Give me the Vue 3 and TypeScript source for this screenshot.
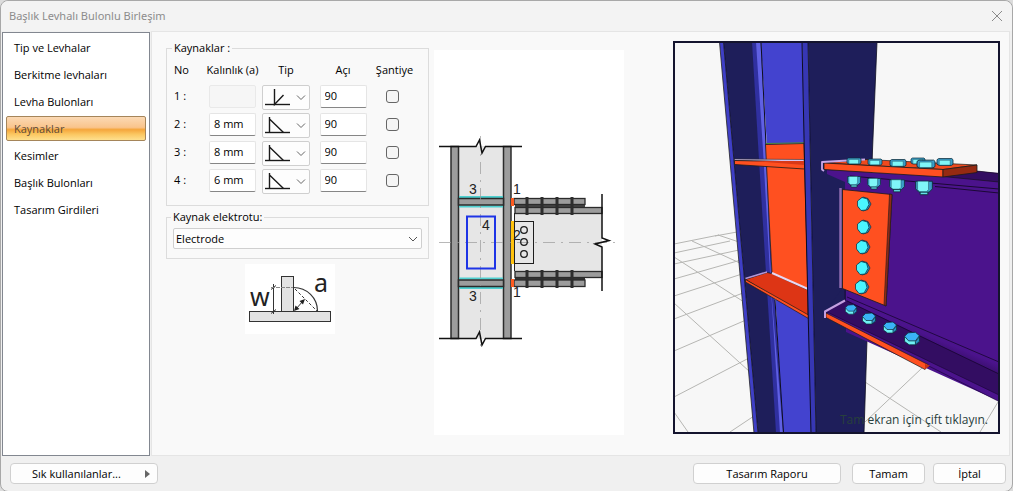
<script setup lang="ts">
import { ref } from 'vue'

interface Weld {
  no: number
  size: string
  kind: 'bevel' | 'fillet'
  angle: string
  site: boolean
}

interface Bolt {
  x: number
  y: number
  r: number
}

const pages = [
  'Tip ve Levhalar',
  'Berkitme levhaları',
  'Levha Bulonları',
  'Kaynaklar',
  'Kesimler',
  'Başlık Bulonları',
  'Tasarım Girdileri',
]
const current = ref('Kaynaklar')

const welds = ref<Weld[]>([
  { no: 1, size: '', kind: 'bevel', angle: '90', site: false },
  { no: 2, size: '8 mm', kind: 'fillet', angle: '90', site: false },
  { no: 3, size: '8 mm', kind: 'fillet', angle: '90', site: false },
  { no: 4, size: '6 mm', kind: 'fillet', angle: '90', site: false },
])
const electrode = ref('Electrode')

const boltLines = [527, 542, 557, 572]

const floorLines =
  'M674 244L719 235M674 253L730 241M674 264L739 250M674 279L741 260M674 296L742 274M674 319L743 293M674 351L746 320M674 397L749 358M730 432L754 416' +
  'M718 235L739 242M692 241L742 264M674 257L744 302M674 303L750 372M674 412L688 432M715 236L737 232' +
  'M922 368L865 422M865 382L941 432M998 402L980 432'

const webBolts: Bolt[] = [
  { x: 864, y: 204, r: 7 },
  { x: 864, y: 227, r: 7 },
  { x: 863, y: 247, r: 7 },
  { x: 863, y: 268, r: 7 },
  { x: 862, y: 287, r: 7 },
]
const topBolts: Bolt[] = [
  { x: 854, y: 161, r: 7 },
  { x: 875, y: 162, r: 7 },
  { x: 918, y: 161, r: 7 },
  { x: 898, y: 163, r: 8 },
  { x: 926, y: 164, r: 9 },
  { x: 945, y: 162, r: 8 },
]
const nuts: Bolt[] = [
  { x: 854, y: 181, r: 7 },
  { x: 874, y: 183, r: 7 },
  { x: 897, y: 185, r: 8 },
  { x: 924, y: 187, r: 9 },
]
const lowerBolts: Bolt[] = [
  { x: 851, y: 309, r: 6 },
  { x: 869, y: 318, r: 7 },
  { x: 890, y: 327, r: 7 },
  { x: 912, y: 338, r: 8 },
]

const place = (b: Bolt) => `translate(${b.x} ${b.y}) scale(${b.r / 7})`
</script>

<template>
  <div class="window">
    <header class="titlebar">
      <h1>Başlık Levhalı Bulonlu Birleşim</h1>
      <button class="close" type="button" aria-label="Kapat">
        <svg width="12" height="12" viewBox="0 0 12 12"><path d="M1 1L11 11M11 1L1 11" fill="none" stroke="#8a8a8a" /></svg>
      </button>
    </header>

    <div class="body">
      <nav class="pages">
        <button
          v-for="p in pages"
          :key="p"
          type="button"
          :class="['page', { active: p === current }]"
          @click="current = p"
        >{{ p }}</button>
      </nav>

      <main class="content">
        <div class="form">
          <fieldset class="group">
            <legend>Kaynaklar :</legend>
            <div class="grid head">
              <span class="left">No</span>
              <span>Kalınlık (a)</span>
              <span>Tip</span>
              <span>Açı</span>
              <span>Şantiye</span>
            </div>
            <div v-for="w in welds" :key="w.no" class="grid row">
              <span class="left">{{ w.no }} :</span>
              <input v-model="w.size" class="field" type="text" :disabled="w.kind === 'bevel'" :aria-label="`Kalınlık ${w.no}`" />
              <span class="type">
                <select v-model="w.kind" :aria-label="`Tip ${w.no}`">
                  <option value="bevel">Küt</option>
                  <option value="fillet">Köşe</option>
                </select>
                <svg width="48" height="25" viewBox="0 0 48 25">
                  <g fill="none" stroke="#1a1a1a" stroke-width="1.4">
                    <path d="M3 19.5H28" />
                    <path v-if="w.kind === 'bevel'" d="M12.500 4V19.500L21.500 10" />
                    <path v-else d="M7.500 4V19.500M7.500 6L21.500 19.500" />
                  </g>
                  <path d="M35 10.500L39 14.500L43 10.500" fill="none" stroke="#666" />
                </svg>
              </span>
              <input v-model="w.angle" class="field" type="text" :aria-label="`Açı ${w.no}`" />
              <input v-model="w.site" class="tick" type="checkbox" :aria-label="`Şantiye ${w.no}`" />
            </div>
          </fieldset>

          <fieldset class="group electrode">
            <legend>Kaynak elektrotu:</legend>
            <span class="combo">
              <select v-model="electrode" aria-label="Kaynak elektrotu">
                <option>Electrode</option>
              </select>
              <svg width="10" height="6" viewBox="0 0 10 6"><path d="M1 1L5 5L9 1" fill="none" stroke="#555" /></svg>
            </span>
          </fieldset>

          <svg class="weld" width="90" height="70" viewBox="245 264 90 70" aria-hidden="true">
            <rect x="245" y="264" width="90" height="70" fill="#fff" />
            <g fill="#e3e3e3" stroke="#333">
              <rect x="281.500" y="276.500" width="12" height="35" />
              <rect x="249.500" y="311.500" width="81" height="10" />
            </g>
            <g fill="none" stroke="#333">
              <path d="M293.500 287.500C307 287.500 317.500 298 317.500 311" stroke-width="1.200" />
              <path d="M295 289L317 311" stroke-dasharray="3 2" />
              <path d="M296 309L303 301" />
              <path d="M273.500 284V314" />
              <path d="M271 289.500L276 285.500M271 313.500L276 309.500" />
              <path d="M271 287.500H293" stroke="#888" stroke-dasharray="4 1" />
            </g>
            <path d="M294 311L295.500 305.500L299.500 309ZM305 299L299.500 301L303 304.500Z" fill="#222" />
            <text x="250" y="306" class="big">w</text>
            <text x="314" y="292" class="big">a</text>
          </svg>
        </div>

        <svg class="section" width="190" height="385" viewBox="434 50 190 385" aria-hidden="true">
          <rect x="434" y="50" width="190" height="385" fill="#fff" />
          <rect x="458" y="146" width="46" height="193" fill="#e6e6e6" />
          <g fill="#9c9c9c" stroke="#2b2b2b" stroke-width="1.500">
            <rect x="451" y="146.500" width="7.500" height="192" />
            <rect x="503.500" y="146.500" width="7.500" height="192" />
          </g>
          <g stroke="#4fcfcf" stroke-width="2">
            <path d="M459 197H503M459 206.500H503M459 278.500H503M459 288H503" />
          </g>
          <g fill="#9c9c9c" stroke="#2b2b2b" stroke-width="1.500">
            <rect x="458.500" y="198.500" width="45" height="6.500" />
            <rect x="458.500" y="280" width="45" height="6.500" />
          </g>
          <rect x="515" y="213" width="87" height="59" fill="#e6e6e6" />
          <rect x="515" y="204" width="70" height="4" fill="#444" />
          <rect x="515" y="277" width="70" height="4" fill="#333" />
          <g fill="#9c9c9c" stroke="#2b2b2b" stroke-width="1.300">
            <rect x="514" y="198.500" width="71" height="6" />
            <rect x="515" y="207.500" width="87" height="6" />
            <rect x="515" y="271.500" width="87" height="6" />
            <rect x="514" y="280" width="71" height="6.500" />
          </g>
          <g stroke="#2d2d2d" stroke-width="3">
            <path v-for="x in boltLines" :key="x" :d="`M${x} 197V215M${x} 270V288`" />
          </g>
          <rect x="514.500" y="221.500" width="19" height="42" fill="#e6e6e6" stroke="#1d1d1d" />
          <path d="M514.500 213V221M514.500 264V271" stroke="#222" />
          <path d="M514.500 222V263" stroke="#222" stroke-dasharray="4 3" />
          <g fill="#ff5a1e">
            <rect x="511" y="198" width="3" height="8" />
            <rect x="511" y="279" width="3" height="8" />
          </g>
          <rect x="511" y="221" width="3" height="43" fill="#ffc20e" />
          <g fill="none" stroke="#9a9a9a" stroke-width="0.700">
            <path d="M439 242.500H619" stroke-dasharray="12 6 2 6" />
            <path d="M480.500 136V346" stroke-dasharray="12 6 2 6" />
          </g>
          <g fill="none" stroke="#1d1d1d" stroke-width="1.300">
            <circle cx="524" cy="230" r="3.300" />
            <circle cx="524" cy="242" r="3.300" />
            <circle cx="524" cy="254" r="3.300" />
          </g>
          <rect x="467" y="216.500" width="28" height="52" fill="none" stroke="#1e34e6" stroke-width="2" />
          <g fill="none" stroke="#111" stroke-width="1.500">
            <path d="M439 146.500H476L479.500 140L482 153L485.500 146.500H522" />
            <path d="M439 338.500H476L479.500 332L482 345L485.500 338.500H522" />
            <path d="M602 194V238L609 240.500L595 244L602 247V291" />
          </g>
          <g class="mark">
            <text x="469" y="194">3</text>
            <text x="513" y="194">1</text>
            <text x="482" y="230">4</text>
            <text x="513" y="240">2</text>
            <text x="469" y="301">3</text>
            <text x="513" y="297">1</text>
          </g>
        </svg>

        <svg class="model" viewBox="673 41 327 393" role="img" aria-label="Birleşim modeli">
          <defs>
            <linearGradient id="root" gradientUnits="userSpaceOnUse" x1="925" y1="334" x2="920" y2="346">
              <stop offset="0" stop-color="#4b138c" />
              <stop offset="1" stop-color="#330d62" />
            </linearGradient>
          </defs>
          <rect x="673" y="41" width="327" height="393" fill="#f7f7f7" />
          <path :d="floorLines" fill="none" stroke="#b6b6b3" />

          <g stroke-linejoin="round">
            <path d="M719.500 42L754 433H758L723.500 42Z" fill="#3f3fc6" />
            <path d="M723.500 42L758 433H777L753 42Z" fill="#1e1e5a" stroke="#0c0c20" stroke-width="0.800" />
            <path d="M761 42L783 433H812L802 42Z" fill="#4343cf" />
            <path d="M752 42L761 42L766 145L772 273L775 300L783.500 433H776L766 273L759 160Z" fill="#3030a0" />
            <path d="M756 42H760.500L766 150L769 236L772 300L783 433H780L770 273L763 150Z" fill="#6060e4" />
            <path d="M761 42L766 145M775 300L783.500 433" stroke="#0c0c20" />
            <path d="M719.500 42L754 433" stroke="#222" stroke-width="0.800" />

            <path d="M765.500 144.500L804 143.500L808 289L772 273L770 236Z" fill="#ff5020" stroke="#1b1b1b" stroke-width="0.800" />
            <path d="M766 143.500L804 142.800" stroke="#4c8a35" />
            <path d="M734.500 159L804 159.500V162L734.500 160.500Z" fill="#d8c4ee" stroke="#333" stroke-width="0.600" />
            <path d="M734.500 160.500L804.500 162V169L734.500 164.500Z" fill="#ff5020" stroke="#1b1b1b" stroke-width="0.800" />
            <path d="M752 161L804.500 161V165Z" fill="#d83818" />
            <path d="M745.500 279.500L767 272.500L772 273.500L808 290V317Z" fill="#dd3515" stroke="#1b1b1b" stroke-width="0.800" />
            <path d="M745.500 279.500L808.500 315V318.500L745.500 282Z" fill="#ff5020" stroke="#1b1b1b" stroke-width="0.700" />
            <path d="M745.500 278.500L767 272" stroke="#b495d6" stroke-width="1.500" />
            <path d="M772 273L808 289" stroke="#e8d8f4" stroke-width="2" />

            <path d="M802 42H808L816 433H811L804.500 160Z" fill="#3737b4" />
            <path d="M802 42L804.500 160L811 433" fill="none" stroke="#0c0c20" />
            <path d="M808 42H877L872.500 150L867 340L864 433H816Z" fill="#1e1e5a" stroke="#0c0c20" stroke-width="0.800" />
          </g>

          <g stroke-linejoin="round">
            <path d="M827 170L943 176L977 171L999 173V401L846 332V300L845 182L827 174Z" fill="#4b138c" />
            <path d="M845 285L825 312L846 323Z" fill="#1e1e5a" />
            <path d="M943 176.500L977 171L999 173.500V182Z" fill="#330d62" stroke="#111" stroke-width="0.600" />
            <path d="M850 176L999 189M935 186.500L999 193" fill="none" stroke="#1b0835" />

            <path d="M847 297L999 362V375L847 301Z" fill="url(#root)" />
            <path d="M825 312L846 300L999 374V396Z" fill="#330d62" />
            <path d="M847 297L999 362M847 301L999 374M845 287V300" fill="none" stroke="#160530" stroke-width="0.800" />
            <path d="M827 312L999 395V401.500L827 314.500Z" fill="#4b138c" stroke="#160530" stroke-width="0.600" />
            <path d="M826 313L928 364.500L925 369.500L826 317.500Z" fill="#ff5020" stroke="#1b1b1b" stroke-width="0.700" />
            <path d="M925 364L930 365.500L925 369.500Z" fill="#c63518" />
            <path d="M825 318V311.500L845 300.500" fill="none" stroke="#c3a0e0" stroke-width="2" />

            <path d="M824 163L866 159.500L977 165L943 169.500Z" fill="#f04a1e" stroke="#1b1b1b" stroke-width="0.700" />
            <path d="M824 163L943 169.500V177L824 169.500Z" fill="#ff5020" stroke="#1b1b1b" stroke-width="0.800" />
            <path d="M943 169.500L977 165V172.500L943 177Z" fill="#962a12" stroke="#1b1b1b" stroke-width="0.800" />
            <path d="M824 171L822 169.500V162L865 159.500" fill="none" stroke="#caa8e8" stroke-width="1.800" />

            <path d="M840.500 188V288" stroke="#8f6cb0" stroke-width="2.500" />
            <path d="M842.500 189.500L892 194.500L886 306L842.500 288.500Z" fill="#ff5020" stroke="#1b1b1b" stroke-width="0.800" />
            <path d="M889.500 194L892 194.500L886 306L884 305Z" fill="#8f2a18" stroke="#1b1b1b" stroke-width="0.600" />
          </g>

          <g stroke="#0b2b3a" stroke-width="0.700" stroke-linejoin="round">
            <g v-for="(b, i) in webBolts" :key="`w${i}`" :transform="place(b)">
              <path d="M-5.500 -3.500L-1 -7L4 -5.500L7 0L4 5.500L-1 7L-5.500 3.500Z" fill="#2b8fc4" />
              <path d="M-6.500 -3L-2 -6.500L3.500 -5L5 0.500L2 6L-3 6.500L-6.500 2Z" fill="#4af6ff" />
            </g>
            <g v-for="(b, i) in nuts" :key="`n${i}`" :transform="place(b)">
              <path d="M-3 3H3V6H-3Z" fill="#62dfe8" />
              <path d="M-6.500 -4.500H6.500V1.500L4 4H-4L-6.500 1.500Z" fill="#3b9fc8" />
              <path d="M-5 -4.500H3.500V2L2 3.500H-3.500L-5 2Z" fill="#7ff6f8" stroke-width="0.300" />
            </g>
            <g v-for="(b, i) in topBolts" :key="`t${i}`" :transform="place(b)">
              <path d="M-7 -2L-5.500 -3H6L7 -2V2L5.500 3H-5L-7 2Z" fill="#3b9fc8" />
              <path d="M-5 -1.500H4.500V2.700H-5Z" fill="#7ff6f8" stroke-width="0.300" />
            </g>
            <g v-for="(b, i) in lowerBolts" :key="`l${i}`" :transform="place(b)">
              <path d="M-6.500 -1V3L-2.500 6H3L6.500 3V-1Z" fill="#6ff0f5" />
              <path d="M3 3V6L6.500 3V-1Z" fill="#2b8fc4" />
              <path d="M-6.500 -1.500L-3.500 -4.500L3 -5L6.500 -2L3 2.500L-3 2.500Z" fill="#3ab2f6" />
            </g>
          </g>

          <text x="840" y="424" class="hint">Tam ekran için çift tıklayın.</text>
          <rect x="674" y="42" width="325" height="391" fill="none" stroke="#14142e" stroke-width="2" />
        </svg>
      </main>
    </div>

    <footer class="footer">
      <button type="button" class="btn wide menu">
        <span>Sık kullanılanlar...</span>
        <svg width="5" height="8" viewBox="0 0 5 8"><path d="M0 0L5 4L0 8Z" fill="#666" /></svg>
      </button>
      <span class="spacer"></span>
      <button type="button" class="btn wide report">Tasarım Raporu</button>
      <button type="button" class="btn">Tamam</button>
      <button type="button" class="btn">İptal</button>
    </footer>
  </div>
</template>

<style>
body {
  background: #dcdcdc;
}
</style>

<style scoped>
* {
  box-sizing: border-box;
}

.window {
  display: flex;
  flex-direction: column;
  min-height: 100vh;
  border: 1px solid #a8a8a8;
  border-radius: 8px;
  background: #f0f0f0;
  color: #000;
  font: 11px/14px 'Open Sans', sans-serif;
}

button,
input,
select {
  font: inherit;
  color: inherit;
}

.titlebar {
  display: flex;
  align-items: center;
  justify-content: space-between;
  height: 30px;
  padding: 0 9px 0 8px;
  border-radius: 8px 8px 0 0;
  background: #f3f3f3;
}

.titlebar h1 {
  margin: 0;
  color: #8c8c8c;
  font: 11px/14px 'Noto Sans', sans-serif;
}

.close {
  display: flex;
  padding: 0;
  border: 0;
  background: none;
}

.body {
  display: flex;
  flex: 1;
  gap: 1px;
  padding: 0 2px 0 1px;
}

.pages {
  display: flex;
  flex-direction: column;
  gap: 2px;
  width: 148px;
  margin-top: 1px;
  padding: 2px 3px;
  border: 1px solid #828790;
  background: #fff;
}

.page {
  height: 25px;
  padding: 0 7px;
  border: 1px solid transparent;
  border-radius: 2px;
  background: none;
  text-align: left;
}

.page.active {
  border-color: #a5855a;
  background: linear-gradient(#fbd9b4 0%, #f9c48c 45%, #f5a63c 55%, #fbc761 75%, #fee08e 100%);
  color: #5c4a38;
}

.content {
  display: flex;
  flex: 1;
  align-items: flex-start;
  padding: 9px 9px 20px 14px;
  border: 1px solid #e5e5e5;
  background: #f9f9f9;
}

.form {
  display: flex;
  flex-direction: column;
  width: 263px;
}

.group {
  min-width: 0;
  margin: 0;
  padding: 8px 7px 9px;
  border: 1px solid #dcdcdc;
}

.group legend {
  margin-left: -2px;
  padding: 0 2px;
}

.grid {
  display: grid;
  grid-template-columns: 29px 47px 48px 54px 37px;
  column-gap: 6px;
  justify-items: center;
  white-space: nowrap;
}

.left {
  justify-self: start;
}

.head {
  margin-bottom: 8px;
}

.row {
  align-items: start;
  height: 28px;
}

.row:last-child {
  height: 27px;
}

.row .left {
  padding-top: 4px;
}

.field {
  width: 47px;
  height: 23px;
  padding: 0 4px 2px;
  border: 1px solid #e5e5e5;
  border-bottom-color: #868686;
  border-radius: 2px;
  background: #fff;
}

.field:disabled {
  border-color: #e9e9e9;
  background: #f6f6f6;
}

.type,
.combo {
  position: relative;
  display: block;
}

.type select,
.combo select {
  display: block;
  width: 100%;
  appearance: none;
  border: 1px solid #cfcfcf;
  border-radius: 2px;
  background: #fdfdfd;
}

.type select {
  width: 48px;
  height: 25px;
  color: transparent;
}

.type svg {
  position: absolute;
  inset: 0;
  pointer-events: none;
}

.tick {
  width: 13px;
  height: 13px;
  margin: 5px 5px 0 0;
  appearance: none;
  border: 1px solid #666;
  border-radius: 3px;
  background: #f5f5f5;
}

.tick:checked {
  background: #0067c0;
}

.electrode {
  margin-top: 4px;
  padding: 4px 6px 9px;
}

.combo select {
  height: 21px;
  padding: 0 2px;
}

.combo svg {
  position: absolute;
  top: 8px;
  right: 4px;
  pointer-events: none;
}

.weld {
  margin: 5px 0 0 79px;
}

.big {
  font: 25px 'Noto Sans', sans-serif;
  fill: #222;
}

.section {
  flex: none;
  margin: 9px 0 0 5px;
}

.mark {
  font: 14px 'Liberation Sans', sans-serif;
  fill: #222;
}

.model {
  flex: 1;
  min-width: 0;
  margin-left: 49px;
}

.hint {
  font: 12px 'Open Sans', sans-serif;
  fill: #28403c;
}

.footer {
  display: flex;
  align-items: center;
  gap: 8px;
  height: 35px;
  padding: 0 6px 0 9px;
}

.spacer {
  flex: 1;
}

.btn {
  width: 73px;
  height: 21px;
  padding: 0;
  border: 1px solid #d0d0d0;
  border-radius: 4px;
  background: #fdfdfd;
}

.wide {
  width: 148px;
}

.report {
  margin-right: 3px;
}

.menu {
  display: flex;
  align-items: center;
  justify-content: space-between;
  padding: 0 7px 0 21px;
}
</style>
